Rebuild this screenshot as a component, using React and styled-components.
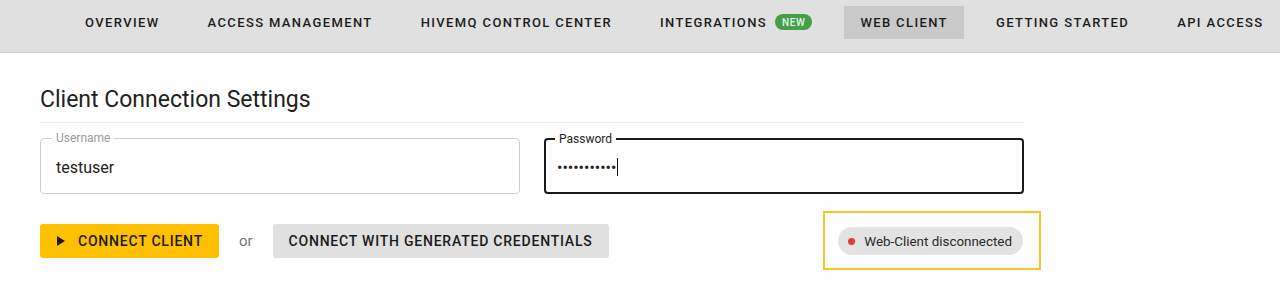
import React from "react";
import styled, { createGlobalStyle } from "styled-components";

const Global = createGlobalStyle`
  html, body { margin: 0; padding: 0; background: #ffffff; }
  body { font-family: Roboto, "Noto Sans", "Liberation Sans", sans-serif; color: #212121; min-height: 291px; }
  * { box-sizing: border-box; }
`;

const NavBar = styled.nav`
  height: 53px;
  background: #e0e0e0;
  border-bottom: 1px solid #d4d4d4;
  display: flex;
  align-items: center;
  padding-left: 69px;
  gap: 16px;
`;

const NavItem = styled.div`
  height: 33px;
  margin-top: -8px;
  padding: 0 16px;
  display: flex;
  align-items: center;
  gap: 8px;
  font-size: 13px;
  font-weight: 500;
  letter-spacing: 1.38px;
  text-transform: uppercase;
  color: #1c1c1c;
  white-space: nowrap;
  background: ${(p) => (p.$active ? "#c9c9c9" : "transparent")};
`;

const NewBadge = styled.span`
  display: inline-flex;
  align-items: center;
  justify-content: center;
  height: 16px;
  padding: 0 7px;
  border-radius: 8px;
  background: #43a047;
  color: #e8f5e9;
  font-size: 10px;
  font-weight: 500;
  letter-spacing: 0.6px;
`;

const Main = styled.main`
  width: 984px;
  margin-left: 40px;
  padding-top: 33px;
  padding-bottom: 33px;
`;

const Heading = styled.h1`
  margin: 0;
  font-size: 23px;
  line-height: 28px;
  font-weight: 400;
  color: #212121;
  padding-bottom: 8px;
  border-bottom: 1px solid #ececec;
`;

const FieldRow = styled.div`
  display: grid;
  grid-template-columns: 1fr 1fr;
  gap: 24px;
  margin-top: 15px;
`;

const Field = styled.div`
  position: relative;
  height: 56px;
  border-radius: 4px;
  border: ${(p) => (p.$focused ? "2px solid #1a1a1a" : "1px solid #cfcfcf")};
  display: flex;
  align-items: center;
  padding-left: ${(p) => (p.$focused ? "11px" : "15px")};
`;

const FieldLabel = styled.span`
  position: absolute;
  top: -8px;
  left: ${(p) => (p.$focused ? "9px" : "11px")};
  padding: 0 4px;
  background: #ffffff;
  font-size: 12px;
  line-height: 14px;
  color: ${(p) => (p.$focused ? "#222222" : "#9a9a9a")};
`;

const FieldValue = styled.span`
  font-size: 16px;
  color: #222222;
  margin-top: 2px;
`;

const Dots = styled.span`
  font-size: 16px;
  letter-spacing: 0;
  color: #222222;
  margin-top: 2px;
`;

const Caret = styled.span`
  display: inline-block;
  width: 1px;
  height: 18px;
  background: #111111;
  margin-left: 1px;
  margin-top: 2px;
`;

const ActionRow = styled.div`
  display: flex;
  align-items: center;
  margin-top: 30px;
`;

const Button = styled.button`
  height: 34px;
  border: none;
  border-radius: 3px;
  display: inline-flex;
  align-items: center;
  gap: 13px;
  padding: 0 16px 0 ${(p) => (p.$icon ? "17px" : "16px")};
  font-family: inherit;
  font-size: 14px;
  font-weight: 500;
  letter-spacing: 0.78px;
  text-transform: uppercase;
  color: #1a1a1a;
  background: ${(p) => (p.$primary ? "#ffc000" : "#e0e0e0")};
  cursor: pointer;
`;

const OrText = styled.span`
  margin: 0 20px;
  font-size: 15px;
  color: #777777;
`;

const Spacer = styled.div`
  flex: 1;
`;

const Highlight = styled.div`
  position: relative;
  margin-right: 1px;
  &::after {
    content: "";
    position: absolute;
    left: -15px;
    right: -18px;
    top: -16px;
    bottom: -15px;
    border: 2px solid #f7c52b;
    pointer-events: none;
  }
`;

const Chip = styled.div`
  height: 28px;
  border-radius: 14px;
  background: #e3e3e3;
  display: flex;
  align-items: center;
  gap: 9px;
  padding: 0 11px 0 10px;
  font-size: 13.4px;
  color: #2a2a2a;
`;

const StatusDot = styled.span`
  width: 7px;
  height: 7px;
  border-radius: 50%;
  background: ${(p) => p.$color};
`;

const navItems = [
  { label: "Overview" },
  { label: "Access Management" },
  { label: "HiveMQ Control Center" },
  { label: "Integrations", badge: "New" },
  { label: "Web Client", active: true },
  { label: "Getting Started" },
  { label: "API Access" },
];

export default function App() {
  return (
    <>
      <Global />
      <NavBar>
        {navItems.map((item) => (
          <NavItem key={item.label} $active={item.active}>
            {item.label}
            {item.badge && <NewBadge>{item.badge.toUpperCase()}</NewBadge>}
          </NavItem>
        ))}
      </NavBar>
      <Main>
        <Heading>Client Connection Settings</Heading>
        <FieldRow>
          <Field>
            <FieldLabel>Username</FieldLabel>
            <FieldValue>testuser</FieldValue>
          </Field>
          <Field $focused>
            <FieldLabel $focused>Password</FieldLabel>
            <Dots>•••••••••••</Dots>
            <Caret />
          </Field>
        </FieldRow>
        <ActionRow>
          <Button $primary $icon>
            <svg width="8" height="10" viewBox="0 0 8 10" aria-hidden="true">
              <polygon points="0,0 8,5 0,10" fill="#1a1a1a" />
            </svg>
            Connect Client
          </Button>
          <OrText>or</OrText>
          <Button>Connect with generated credentials</Button>
          <Spacer />
          <Highlight>
            <Chip>
              <StatusDot $color="#e53945" />
              Web-Client disconnected
            </Chip>
          </Highlight>
        </ActionRow>
      </Main>
    </>
  );
}
